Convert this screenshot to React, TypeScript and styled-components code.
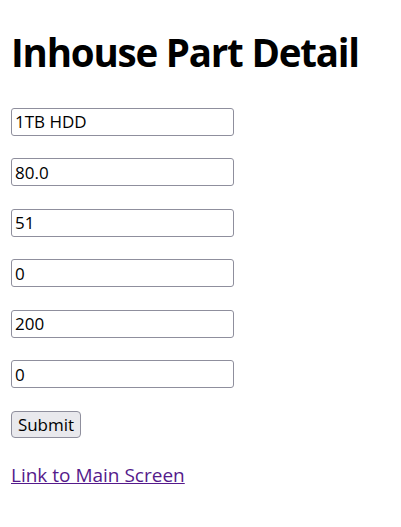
import React from "react";
import styled, { createGlobalStyle } from "styled-components";

const Global = createGlobalStyle`
  html, body { margin: 0; padding: 0; background: #ffffff; }
  body { font-family: "Open Sans", "Noto Sans", sans-serif; color: #000; }
`;

const Page = styled.div`
  padding: 0 11px;
`;

const Title = styled.h1`
  margin: 0;
  padding-top: 24px;
  height: 57px;
  font-size: 38.5px;
  font-weight: 700;
  line-height: 57px;
  letter-spacing: -1.2px;
`;

const Form = styled.form`
  display: flex;
  flex-direction: column;
  align-items: flex-start;
  gap: 22.5px;
  margin-top: 26.5px;
`;

const Field = styled.input`
  box-sizing: border-box;
  width: 223px;
  height: 28px;
  margin: 0;
  padding: 0 3px;
  border: 1px solid #8f8f9d;
  border-radius: 3px;
  background: #fff;
  font-family: "Open Sans", "Noto Sans", sans-serif;
  font-size: 17px;
  color: #000;
  outline: none;
`;

const SubmitButton = styled.button`
  box-sizing: border-box;
  width: 70px;
  height: 27px;
  margin-top: 0.5px;
  padding: 0;
  border: 1px solid #8f8f9d;
  border-radius: 4px;
  background: #e9e9ed;
  font-family: "Open Sans", "Noto Sans", sans-serif;
  font-size: 17px;
  color: #000;
`;

const MainLink = styled.a`
  display: inline-block;
  margin-top: 23px;
  font-size: 19px;
  line-height: 28px;
  color: #551a8b;
  text-decoration: underline;
`;

const values = ["1TB HDD", "80.0", "51", "0", "200", "0"];

export default function App() {
  return (
    <>
      <Global />
      <Page>
        <Title>Inhouse Part Detail</Title>
        <Form onSubmit={(e) => e.preventDefault()}>
          {values.map((v, i) => (
            <Field key={i} type="text" defaultValue={v} />
          ))}
          <SubmitButton type="submit">Submit</SubmitButton>
        </Form>
        <MainLink href="#">Link to Main Screen</MainLink>
      </Page>
    </>
  );
}
